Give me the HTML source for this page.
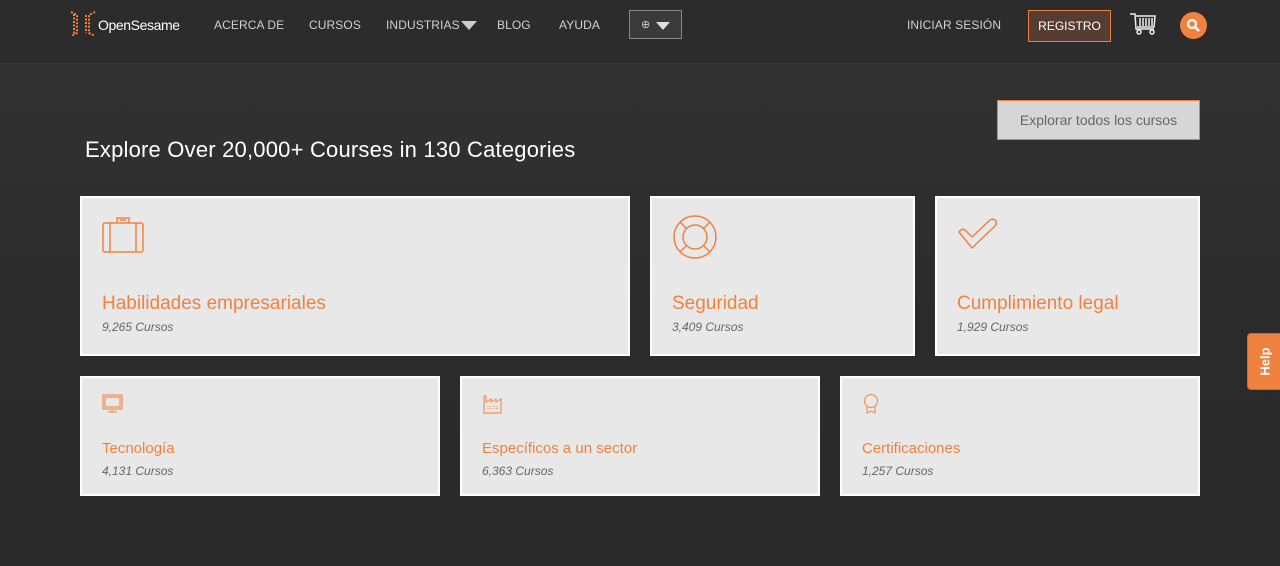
<!DOCTYPE html>
<html><head><meta charset="utf-8"><style>
*{margin:0;padding:0;box-sizing:border-box}
body{width:1280px;height:566px;overflow:hidden;background:#2f2f2f;font-family:"Liberation Sans",sans-serif;position:relative}
.hdr{position:absolute;left:0;top:0;width:1280px;height:62px;background:#2c2c2c;border-bottom:1px solid #262626}
.nav{position:absolute;top:18px;color:#d0d0d0;font-size:12px;letter-spacing:.1px}
.hero{position:absolute;left:0;top:62px;width:1280px;height:504px;background:linear-gradient(180deg,#323232 0%,#2b2b2b 50%,#2a2a2a 100%)}
.card{position:absolute;background:#e8e8e8;border:2px solid #fff}
.card h3{position:absolute;left:20px;color:#f0823f;font-weight:normal}
.card p{position:absolute;left:20px;color:#666;font-style:italic;font-size:12px}
.card svg{position:absolute;left:20px}
</style></head><body>
<div class="hdr">
<svg style="position:absolute;left:69px;top:11px" width="28" height="26" viewBox="0 0 28 26"><g fill="none" stroke="#f0823f" stroke-width="2" stroke-dasharray="2 1.5"><path d="M2 1 L8 4 L8 22 L2 25"/><path d="M5 3 L5 23"/><path d="M26 1 L20 4 L20 22 L26 25"/><path d="M17 4 L17 22"/></g></svg>
<div class="nav" style="left:98px;top:17px;color:#fff;font-size:14px;letter-spacing:-.4px">OpenSesame</div>
<div class="nav" style="left:214px">ACERCA DE</div>
<div class="nav" style="left:309px">CURSOS</div>
<div class="nav" style="left:386px">INDUSTRIAS</div>
<div style="position:absolute;left:461px;top:21px;border-left:8px solid transparent;border-right:8px solid transparent;border-top:9px solid #ccc"></div>
<div class="nav" style="left:497px">BLOG</div>
<div class="nav" style="left:559px">AYUDA</div>
<div style="position:absolute;left:629px;top:10px;width:53px;height:29px;border:1px solid #888;background:#3a3a3a"><span style="position:absolute;left:11px;top:7px;color:#ccc;font-size:11px">⊕</span><div style="position:absolute;left:26px;top:11px;border-left:7px solid transparent;border-right:7px solid transparent;border-top:8px solid #ddd"></div></div>
<div class="nav" style="left:907px">INICIAR SESIÓN</div>
<div style="position:absolute;left:1028px;top:10px;width:83px;height:32px;border:1px solid #e97f3c;background:#573c31;color:#fff;font-size:12px;text-align:center;line-height:30px">REGISTRO</div>
<svg style="position:absolute;left:1129px;top:12px" width="28" height="24" viewBox="0 0 28 24"><g fill="none" stroke="#eee" stroke-width="1.5"><path d="M1 2 H6 L7 17 H25"/><path d="M7 4 H26 L25 15 H8"/><path d="M11 6v8M14 6v8M17 6v8M20 6v8M23 6v8"/><circle cx="10" cy="20" r="2"/><circle cx="23" cy="20" r="2"/></g></svg>
<div style="position:absolute;left:1180px;top:12px;width:27px;height:27px;border-radius:50%;background:#f0823f"></div>
<svg style="position:absolute;left:1186px;top:18px" width="15" height="15" viewBox="0 0 15 15"><circle cx="6" cy="6" r="4" fill="none" stroke="#fff" stroke-width="2.2"/><path d="M9 9 L13 13" stroke="#fff" stroke-width="2.6"/></svg>
</div>
<div class="hero"></div>
<div style="position:absolute;left:85px;top:137px;color:#fff;font-size:22px;letter-spacing:.2px">Explore Over 20,000+ Courses in 130 Categories</div>
<div style="position:absolute;left:997px;top:100px;width:203px;height:40px;border:1px solid #e97f3c;background:#d6d6d6;color:#666;font-size:14px;text-align:center;line-height:38px">Explorar todos los cursos</div>

<div class="card" style="left:80px;top:196px;width:550px;height:160px">
<svg style="top:18px" width="44" height="40" viewBox="0 0 44 40"><g fill="none" stroke="#f0823f" stroke-width="1.5"><rect x="1" y="7" width="40" height="29" rx="2"/><path d="M8 7v29M34 7v29M15 7V2h12v5M18 4h6"/></g></svg>
<h3 style="top:95px;font-size:19px">Habilidades empresariales</h3><p style="top:122px">9,265 Cursos</p></div>
<div class="card" style="left:650px;top:196px;width:265px;height:160px">
<svg style="top:16px" width="46" height="46" viewBox="0 0 46 46"><g fill="none" stroke="#f0823f" stroke-width="1.5"><circle cx="23" cy="23" r="21"/><circle cx="23" cy="23" r="12"/><path d="M8 8l7 7M38 8l-7 7M8 38l7-7M38 38l-7-7"/></g></svg>
<h3 style="top:95px;font-size:19px">Seguridad</h3><p style="top:122px">3,409 Cursos</p></div>
<div class="card" style="left:935px;top:196px;width:265px;height:160px">
<svg style="top:20px" width="42" height="34" viewBox="0 0 42 34"><path d="M2 14 Q5 10 8 12 L15 19 L33 2 Q36 0 39 3 Q40 6 38 8 L15 30 Z" fill="none" stroke="#f0823f" stroke-width="1.5" stroke-linejoin="round"/></svg>
<h3 style="top:95px;font-size:19px">Cumplimiento legal</h3><p style="top:122px">1,929 Cursos</p></div>

<div class="card" style="left:80px;top:376px;width:360px;height:120px">
<svg style="top:16px" width="22" height="20" viewBox="0 0 22 20"><g fill="none" stroke="#f0823f" stroke-width="1.3" opacity=".8"><rect x="1" y="1" width="19" height="14"/><rect x="3" y="3" width="15" height="10"/><path d="M10 15v3M6 18h9"/></g></svg>
<h3 style="top:62px;font-size:15px">Tecnología</h3><p style="top:86px">4,131 Cursos</p></div>
<div class="card" style="left:460px;top:376px;width:360px;height:120px">
<svg style="top:16px" width="22" height="20" viewBox="0 0 22 20"><g fill="none" stroke="#f0823f" stroke-width="1.2" opacity=".8"><path d="M2 19V2h2v6l5-3v3l5-3v3l5-3v14z"/><path d="M6 12v4M9 12v4M12 12v4M15 12v4" stroke-dasharray="1 1"/></g></svg>
<h3 style="top:62px;font-size:15px">Específicos a un sector</h3><p style="top:86px">6,363 Cursos</p></div>
<div class="card" style="left:840px;top:376px;width:360px;height:120px">
<svg style="top:15px" width="18" height="22" viewBox="0 0 18 22"><g fill="none" stroke="#f0823f" stroke-width="1.2" opacity=".8"><circle cx="9" cy="8" r="6.5"/><path d="M5 13v7l4-2 4 2v-7"/></g></svg>
<h3 style="top:62px;font-size:15px">Certificaciones</h3><p style="top:86px">1,257 Cursos</p></div>

<div style="position:absolute;left:1247px;top:333px;width:36px;height:57px;background:#f0823f;border-radius:4px 0 0 4px;border:1px solid #d06a2a"><span style="position:absolute;left:3px;top:20px;transform:rotate(-90deg);color:#fff;font-size:13px;font-weight:bold">Help</span></div>
</body></html>
